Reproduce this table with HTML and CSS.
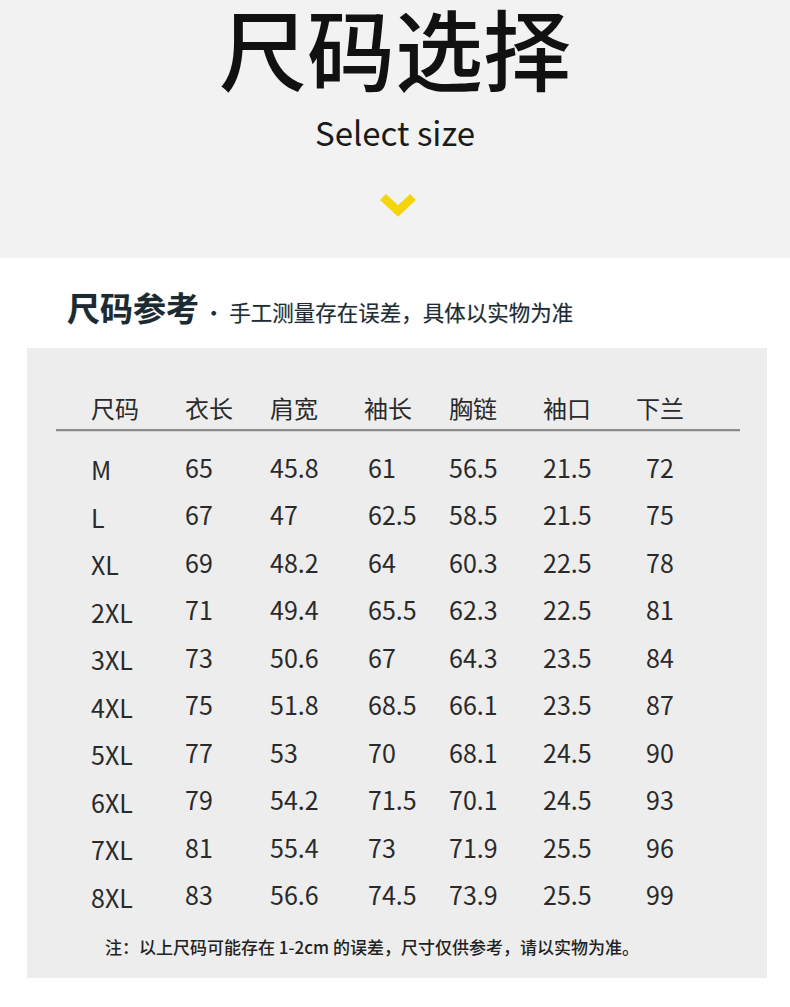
FILE: index.html
```html
<!DOCTYPE html>
<html lang="zh-CN">
<head>
<meta charset="utf-8">
<title>尺码选择</title>
<link rel="stylesheet" href="styles.css">
</head>
<body>
<div class="page">
  <header class="hero">
    <h1 class="hero-title">尺码选择</h1>
    <p class="hero-sub">Select size</p>
    <svg class="chevron" width="36" height="24" viewBox="0 0 36 24" aria-hidden="true">
      <polyline points="3,4 18,18 33,4" fill="none" stroke="#f6d40c" stroke-width="8.5" stroke-linejoin="miter"/>
    </svg>
  </header>

  <section class="ref">
    <h2 class="ref-title">尺码参考<span class="ref-tip">· 手工测量存在误差，具体以实物为准</span></h2>
    <div class="panel">
      <div class="table">
        <div class="row head">
          <span>尺码</span><span>衣长</span><span>肩宽</span><span>袖长</span><span>胸链</span><span>袖口</span><span class="c">下兰</span>
        </div>
        <div class="body">
          <div class="row"><span class="sz">M</span><span>65</span><span>45.8</span><span class="n4">61</span><span>56.5</span><span>21.5</span><span class="c">72</span></div>
          <div class="row"><span class="sz">L</span><span>67</span><span>47</span><span class="n4">62.5</span><span>58.5</span><span>21.5</span><span class="c">75</span></div>
          <div class="row"><span class="sz">XL</span><span>69</span><span>48.2</span><span class="n4">64</span><span>60.3</span><span>22.5</span><span class="c">78</span></div>
          <div class="row"><span class="sz">2XL</span><span>71</span><span>49.4</span><span class="n4">65.5</span><span>62.3</span><span>22.5</span><span class="c">81</span></div>
          <div class="row"><span class="sz">3XL</span><span>73</span><span>50.6</span><span class="n4">67</span><span>64.3</span><span>23.5</span><span class="c">84</span></div>
          <div class="row"><span class="sz">4XL</span><span>75</span><span>51.8</span><span class="n4">68.5</span><span>66.1</span><span>23.5</span><span class="c">87</span></div>
          <div class="row"><span class="sz">5XL</span><span>77</span><span>53</span><span class="n4">70</span><span>68.1</span><span>24.5</span><span class="c">90</span></div>
          <div class="row"><span class="sz">6XL</span><span>79</span><span>54.2</span><span class="n4">71.5</span><span>70.1</span><span>24.5</span><span class="c">93</span></div>
          <div class="row"><span class="sz">7XL</span><span>81</span><span>55.4</span><span class="n4">73</span><span>71.9</span><span>25.5</span><span class="c">96</span></div>
          <div class="row"><span class="sz">8XL</span><span>83</span><span>56.6</span><span class="n4">74.5</span><span>73.9</span><span>25.5</span><span class="c">99</span></div>
        </div>
      </div>
      <p class="note">注：以上尺码可能存在 1-2cm 的误差，尺寸仅供参考，请以实物为准。</p>
    </div>
  </section>
</div>
</body>
</html>
```

FILE: styles.css
```css
* { box-sizing: border-box; }

html, body {
  margin: 0;
  padding: 0;
  background: #ffffff;
}

body {
  font-family: "Noto Sans CJK SC", "Noto Sans", sans-serif;
  color: #222;
}

.page {
  width: 790px;
}

.hero {
  height: 258px;
  background: #f2f2f2;
  display: flex;
  flex-direction: column;
  align-items: center;
}

.hero-title {
  margin: 0;
  font-size: 88px;
  line-height: 91px;
  font-weight: 500;
  color: #111;
  white-space: nowrap;
}

.hero-sub {
  margin: 19px 0 0;
  font-size: 33px;
  line-height: 44px;
  font-weight: 400;
  color: #1a1a1a;
}

.chevron {
  margin: 39px 0 0 6px;
  display: block;
}

.ref {
  padding: 0 23px 0 27px;
}

.ref-title {
  margin: 29px 0 0 40px;
  font-size: 33px;
  line-height: 40px;
  font-weight: 700;
  color: #1c2a31;
  display: flex;
  align-items: baseline;
  white-space: nowrap;
  text-shadow: 0 0 1px rgba(28, 42, 49, 0.35);
}

.ref-tip {
  margin-left: 4px;
  font-size: 21.5px;
  font-weight: 400;
  color: #1f2c33;
}

.panel {
  margin-top: 16px;
  width: 740px;
  background: #ededed;
  padding: 38px 27px 19px 29px;
}

.table {
  width: 684px;
}

.row {
  display: grid;
  grid-template-columns: 94px 85px 94px 85px 94px 92px 50px;
  padding-left: 35px;
  align-items: center;
  white-space: nowrap;
}

.row.head {
  height: 45px;
  font-size: 24px;
  color: #2a2a2a;
  border-bottom: 2px solid #8c8c8c;
  box-shadow: 0 1px 0 #d6d6d6;
}

.body {
  padding-top: 12px;
}

.body .row {
  height: 47.5px;
  font-size: 25px;
  color: #2a2a2a;
}

.sz {
  padding-top: 5px;
}

.n4 {
  padding-left: 4px;
}

.c {
  text-align: center;
}

.note {
  margin: 17px 0 0 49px;
  font-size: 17px;
  line-height: 24px;
  font-weight: 500;
  color: #222;
  white-space: nowrap;
}
```
